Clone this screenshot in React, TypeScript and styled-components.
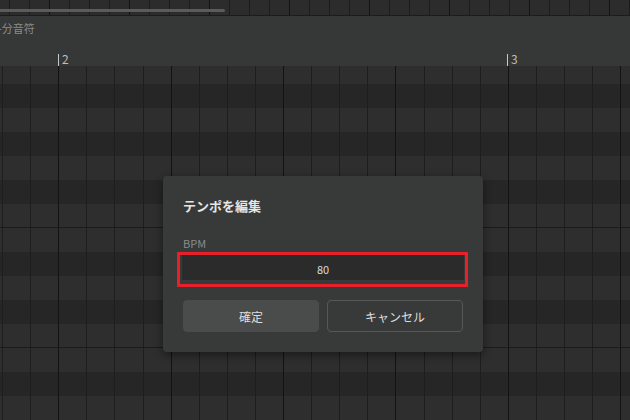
import styled, { createGlobalStyle } from "styled-components";

const GlobalStyle = createGlobalStyle`
  html,
  body {
    margin: 0;
    padding: 0;
    background: #262626;
    overflow: hidden;
  }
  body {
    font-family: "Noto Sans CJK JP", "Noto Sans", sans-serif;
  }
`;

// vertical 1px lines repeated every `period` px, first one at `offset`
const vLines = (offset: number, period: number, color: string) =>
  `repeating-linear-gradient(90deg, transparent 0 ${offset}px, ${color} ${offset}px ${
    offset + 1
  }px, transparent ${offset + 1}px ${period}px)`;

const Screen = styled.div`
  position: relative;
  display: flex;
  flex-direction: column;
  width: 630px;
  height: 420px;
  overflow: hidden;
`;

const TopStrip = styled.div`
  height: 15px;
  flex-shrink: 0;
  background-color: #2c2c2c;
  background-image: ${vLines(49, 80, "#131313")}, ${vLines(9, 20, "#1c1c1c")};
  border-bottom: 1px solid #1c1c1c;
`;

const Scrollbar = styled.div`
  width: 225px;
  height: 3px;
  margin-top: 9px;
  border-radius: 0 2px 2px 0;
  background: #5b5b5b;
`;

const Panel = styled.div`
  display: flex;
  flex-direction: column;
  height: 50px;
  flex-shrink: 0;
  background: #363837;
`;

const Toolbar = styled.div`
  height: 34px;
  padding-top: 4px;
  box-sizing: border-box;
  overflow: hidden;
`;

const NoteLabel = styled.span`
  display: block;
  margin-left: -2px;
  font-size: 11px;
  line-height: 16px;
  color: #8a8c8b;
  white-space: nowrap;
`;

const Ruler = styled.div`
  position: relative;
  height: 16px;
`;

const BarMarker = styled.div`
  position: absolute;
  bottom: 0;
  height: 12px;
  padding-left: 3px;
  border-left: 1px solid #c8c8c8;
  font-size: 12px;
  line-height: 10px;
  color: #bdbdbd;
`;

const Grid = styled.div`
  flex: 1;
  overflow: hidden;
`;

const Rows = styled.div`
  display: flex;
  flex-direction: column;
  margin-top: -6px;
`;

const KeyRow = styled.div<{ $black: boolean; $octaveEdge: boolean }>`
  height: 24px;
  flex-shrink: 0;
  box-sizing: border-box;
  background-color: ${({ $black }) => ($black ? "#262626" : "#2e2e2e")};
  background-image: ${vLines(58.2, 112.4, "#131313")},
    ${vLines(2, 28.1, "#1e1e1e")};
  border-bottom: ${({ $octaveEdge }) =>
    $octaveEdge ? "1px solid #1b1b1b" : "none"};
`;

const Dialog = styled.div`
  position: absolute;
  left: 163px;
  top: 176px;
  width: 320px;
  box-sizing: border-box;
  padding: 20px;
  background: #383a39;
  border-radius: 4px;
  box-shadow: 0 3px 10px rgba(0, 0, 0, 0.45);
`;

const DialogTitle = styled.h2`
  margin: 0;
  font-size: 13px;
  font-weight: 700;
  line-height: 20px;
  color: #e6e6e6;
`;

const FieldLabel = styled.label`
  display: block;
  margin-top: 20px;
  font-size: 11px;
  line-height: 14px;
  color: #8b8b8b;
`;

const FocusFrame = styled.div`
  margin: 2px -5px 0 -6px;
  padding: 0 1px 4px 2px;
  border: 3px solid #e8202a;
`;

const NumberInput = styled.input`
  display: block;
  width: 100%;
  height: 25px;
  box-sizing: border-box;
  padding: 2px 0 0;
  border: none;
  outline: none;
  background: #2b2b2b;
  color: #dcdcdc;
  font-family: inherit;
  font-size: 11px;
  text-align: center;
`;

const Actions = styled.div`
  display: flex;
  gap: 8px;
  margin-top: 13px;
`;

const Button = styled.button<{ $primary?: boolean }>`
  flex: 1;
  height: 32px;
  border-radius: 4px;
  border: 1px solid ${({ $primary }) => ($primary ? "#4a4c4b" : "#565857")};
  background: ${({ $primary }) => ($primary ? "#4a4c4b" : "transparent")};
  color: #dedede;
  font-family: inherit;
  font-size: 12px;
  cursor: pointer;
`;

// B at the top row, going down in pitch
const BLACK_KEYS = [1, 3, 6, 8, 10];
const keyRows = Array.from({ length: 15 }, (_, i) => {
  const pitch = (((11 - i) % 12) + 12) % 12;
  return {
    id: i,
    black: BLACK_KEYS.includes(pitch),
    octaveEdge: pitch === 5 || pitch === 0,
  };
});

const bars = [
  { n: 2, x: 58 },
  { n: 3, x: 507 },
];

export default function App() {
  return (
    <>
      <GlobalStyle />
      <Screen>
        <TopStrip>
          <Scrollbar />
        </TopStrip>
        <Panel>
          <Toolbar>
            <NoteLabel>-分音符</NoteLabel>
          </Toolbar>
          <Ruler>
            {bars.map((b) => (
              <BarMarker key={b.n} style={{ left: b.x }}>
                {b.n}
              </BarMarker>
            ))}
          </Ruler>
        </Panel>
        <Grid>
          <Rows>
            {keyRows.map((r) => (
              <KeyRow key={r.id} $black={r.black} $octaveEdge={r.octaveEdge} />
            ))}
          </Rows>
        </Grid>

        <Dialog>
          <DialogTitle>テンポを編集</DialogTitle>
          <FieldLabel htmlFor="bpm">BPM</FieldLabel>
          <FocusFrame>
            <NumberInput id="bpm" type="text" defaultValue="80" />
          </FocusFrame>
          <Actions>
            <Button $primary>確定</Button>
            <Button>キャンセル</Button>
          </Actions>
        </Dialog>
      </Screen>
    </>
  );
}
